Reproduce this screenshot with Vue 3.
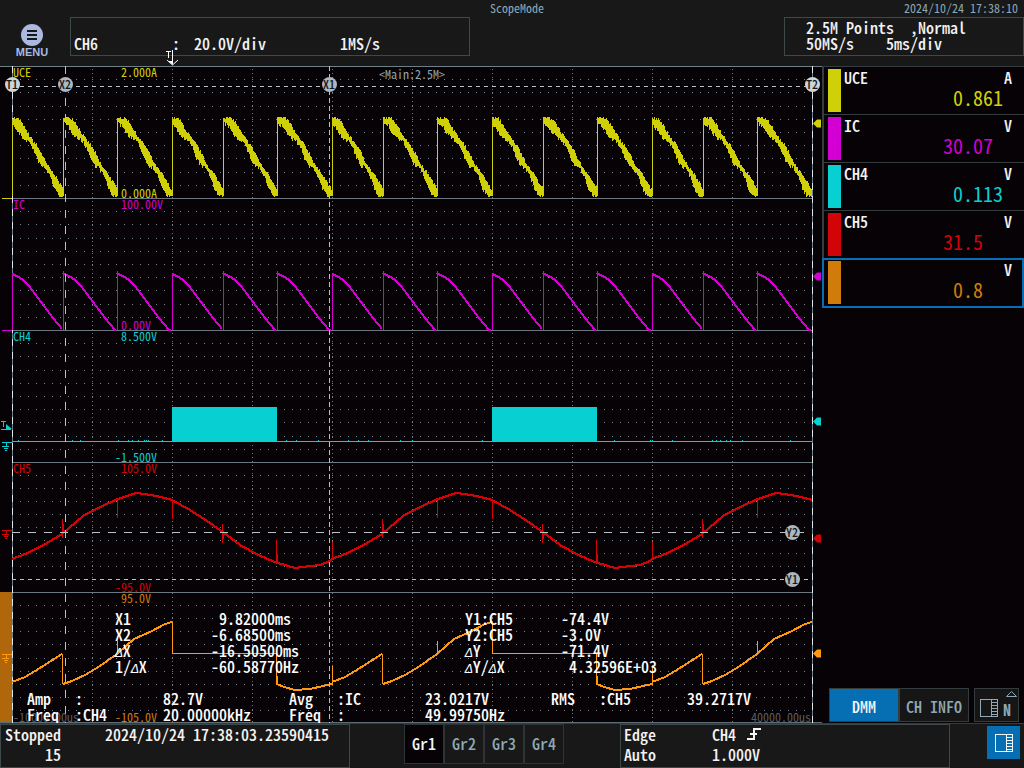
<script setup>
import { ref } from 'vue'

const channels = [
  { name: 'UCE', unit: 'A', value: '0.861', tone: 'yellow' },
  { name: 'IC', unit: 'V', value: '30.07 ', tone: 'magenta' },
  { name: 'CH4', unit: 'V', value: '0.113', tone: 'cyan' },
  { name: 'CH5', unit: 'V', value: '31.5  ', tone: 'red' },
  { name: '', unit: 'V', value: '0.8  ', tone: 'amber' },
]
const record = ['2.5M Points  ,Normal', '50MS/s    5ms/div']
const groups = ['Gr1', 'Gr2', 'Gr3', 'Gr4']
const activeGroup = ref('Gr1')
const activeChannel = ref(4)

const left = 12
const right = 812
const bands = [66, 198, 330, 462, 592, 723]

const dotRows = []
for (let b = 0; b < 5; b++) {
  for (let i = 1; i < 10; i++) {
    dotRows.push(Math.round(bands[b] + ((bands[b + 1] - bands[b]) * i) / 10) + 0.5)
  }
}
const dotCols = Array.from({ length: 9 }, (_, i) => left + 80 * (i + 1) + 0.5)

const resets = [12, 63, 117, 172, 223, 277, 332, 383, 437, 492, 543, 597, 652, 703, 757, 812]

// piecewise-linear lookup in a list of [x, y] points
function at(points, x) {
  for (let i = 1; i < points.length; i++) {
    if (x <= points[i][0]) {
      const [x0, y0] = points[i - 1]
      const [x1, y1] = points[i]
      return y0 + ((y1 - y0) * (x - x0)) / (x1 - x0)
    }
  }
  return points[points.length - 1][1]
}

let seed = 7
function noise() {
  seed = (seed * 16807) % 2147483647
  return seed / 2147483647
}

const currentShape = [[0, 119], [5, 121], [10, 125], [16, 133], [22, 141], [30, 155], [36, 164], [42, 174], [48, 185], [55, 194]]
const rippleShape = [[0, 2], [5, 4], [9, 10], [14, 9], [18, 3], [23, 3], [27, 9], [32, 9], [36, 2], [41, 3], [45, 10], [50, 9], [55, 3]]

let uce = ''
for (let s = 0; s < 15; s++) {
  const x0 = resets[s]
  const x1 = resets[s + 1]
  const shift = s % 3 === 0 ? 3 : 0
  for (let x = x0; x < x1; x++) {
    const t = x - x0 + shift
    const c = at(currentShape, t)
    const h = at(rippleShape, t)
    const top = Math.round(c - h * 0.4 - noise() * 3)
    const bottom = Math.min(197, Math.round(c + h * 0.6 + 1 + noise() * 4))
    uce += `M${x + 0.5} ${Math.max(117, top)}V${bottom}`
  }
  uce += `M${x0 + 0.5} 119V196`
}

const voltShape = [[0, 273], [6, 276], [12, 280], [18, 286], [24, 294], [30, 302], [36, 310], [42, 318], [48, 325], [52, 330], [60, 330]]
let ic = ''
let icEdges = ''
for (let s = 0; s < 15; s++) {
  const shift = s % 3 === 0 ? 1 : 0
  const span = resets[s + 1] - resets[s]
  icEdges += `M${resets[s] + 0.5} 330V${shift ? 274 : 271}`
  for (let t = 0; t < span; t++) ic += `${t ? 'L' : 'M'}${resets[s] + t} ${Math.round(at(voltShape, t + shift))}`
}

const sine = [[0, 559], [13, 554], [30, 546], [50, 534], [71, 516], [88, 507], [106, 499], [124, 493], [133, 494], [145, 496], [160, 500], [178, 510], [195, 521], [211, 532], [228, 545], [246, 555], [263, 562], [283, 568], [298, 566], [308, 565], [320, 560]]
let ch5 = ''
for (let x = left; x <= right; x++) {
  ch5 += `${x === left ? 'M' : 'L'}${x} ${Math.round(at(sine, (x - left) % 320))}`
}
const spikeSet = [[50, 519, 538], [51, 524, 534], [105, 499, 518], [160, 500, 519], [210, 524, 543], [211, 532, 539], [264, 540, 563], [265, 554, 563], [320, 542, 560]]
let spikes = ''
for (let k = 0; k < 3; k++) {
  for (const [x, a, b] of spikeSet) {
    const px = left + x + 320 * k
    if (px < 800) spikes += `M${px + 0.5} ${a}V${b}`
  }
}

const rise = [[12, 682], [25, 677], [40, 668], [62, 654]]
const climb = [[63, 684], [72, 681], [85, 675], [100, 666], [117, 654], [134, 639], [150, 632], [165, 624], [172, 622]]
const trough = [[277, 684], [284, 687], [295, 690], [310, 689], [332, 684]]
let ramp = ''
let rampEdges = ''
for (let k = 0; k < 3; k++) {
  const o = 320 * k
  for (const part of k < 2 ? [rise, climb, trough] : [rise, climb]) {
    ramp += part.map(([x, y], i) => `${i ? 'L' : 'M'}${x + o} ${y}`).join('')
  }
  rampEdges += `M${62.5 + o} 654V684M${117.5 + o} 641V655`
  if (k < 2) rampEdges += `M${172.5 + o} 622V653.5H${276.5 + o}V685M${277.5 + o} 676V685M${332.5 + o} 666V685`
}

let ticks = ''
for (let x = left + 2; x < right; x += 2) {
  if (noise() > 0.88) ticks += `M${x} 440.5h1`
}

const axisLabels = [
  ['UCE', 13, 77, 'yellow'], ['2.000A', 121, 77, 'yellow'], ['0.000A', 121, 198, 'yellow'],
  ['IC', 13, 209, 'magenta'], ['100.00V', 121, 209, 'magenta'], ['0.00V', 121, 330, 'magenta'],
  ['CH4', 13, 341, 'cyan'], ['8.500V', 121, 341, 'cyan'], ['-1.500V', 115, 462, 'cyan'],
  ['CH5', 13, 473, 'red'], ['105.0V', 121, 473, 'red'], ['-95.0V', 115, 592, 'red'],
  ['95.0V', 121, 603, 'amber'], ['-105.0V', 115, 722, 'amber'],
]

const readouts = [
  ['X1', 115, 625], ['9.82000ms', 219, 625],
  ['X2', 115, 641], ['-6.68500ms', 211, 641],
  ['ΔX', 115, 657], ['-16.50500ms', 211, 657],
  ['1/ΔX', 115, 673], ['-60.58770Hz', 211, 673],
  ['Y1:CH5', 465, 625], ['-74.4V', 561, 625],
  ['Y2:CH5', 465, 641], ['-3.0V', 561, 641],
  ['ΔY', 465, 657], ['-71.4V', 561, 657],
  ['ΔY/ΔX', 465, 673], ['4.32596E+03', 569, 673],
  ['Amp', 27, 705], [':', 75, 705], ['82.7V', 163, 705],
  ['Freq', 27, 721], [':CH4', 75, 721], ['20.00000kHz', 163, 721],
  ['Avg', 289, 705], [':IC', 337, 705], ['23.0217V', 425, 705],
  ['Freq', 289, 721], [':', 337, 721], ['49.99750Hz', 425, 721],
  ['RMS', 551, 705], [':CH5', 599, 705], ['39.2717V', 687, 705],
].map(([text, x, y]) => ({ x, y, parts: text.split(/(Δ)/).filter(Boolean) }))

const badges = [
  ['T1', 12, 84, 'bright'], ['X2', 65, 84, 'dim'], ['X1', 329, 84, 'dim'],
  ['T2', 812, 84, 'bright'], ['Y2', 792, 532, 'dim'], ['Y1', 792, 579, 'dim'],
]
const pointers = [[123, 'yellow'], [276, 'magenta'], [421, 'cyan'], [538, 'red'], [653, 'orange']]
const grounds = [[446, 'cyan'], [534, 'red'], [658, 'orange']]
</script>

<template>
  <div class="scope">
    <header class="top">
      <button class="menu" type="button">
        <svg viewBox="0 0 22 22" aria-hidden="true">
          <circle cx="11" cy="11" r="11" fill="#a9b9e0" />
          <path d="M6 7h10M6 11h10M6 15h10" stroke="#181818" stroke-width="2" />
        </svg>
        <span>MENU</span>
      </button>
      <div class="channel-box">
        <span>CH6</span><span>:</span><span>20.0V/div</span><span>1MS/s</span>
      </div>
      <div class="mode">ScopeMode</div>
      <div class="clock">
        <time>2024/10/24 17:38:10</time>
        <div class="record-box">
          <div v-for="line in record" :key="line">{{ line }}</div>
        </div>
      </div>
    </header>

    <main class="main">
      <svg class="plot" viewBox="0 66 822 657" role="img" aria-label="Waveforms">
        <g class="crisp" fill="none">
          <rect x="0" y="592" width="12" height="131" fill="#b0660a" />
          <path v-for="y in dotRows" :key="'r' + y" :d="`M20 ${y}H811`" stroke="#7a868f" stroke-dasharray="1 7" />
          <path v-for="x in dotCols" :key="'c' + x" :d="`M${x} 69V722`" stroke="#6c7880" stroke-dasharray="1 3" />
          <path d="M12 198.5H812M12 330.5H812M12 462.5H812M12 592.5H812" stroke="#6b7880" />
          <path d="M0 66.5H822" stroke="#6f7f88" />
          <path d="M0 722.5H822" stroke="#5d6c75" />
          <path d="M12.5 66V723M812.5 66V723" stroke="#6f8290" />
          <path d="M12.5 66V723M812.5 66V723" stroke="#dfe7ea" stroke-dasharray="7 6" />

          <path d="M2 198.5H12" class="yellow" />
          <path d="M2 330.5H12" class="magenta" />
          <path :d="uce" class="yellow" />
          <path :d="ic" class="magenta curve" />
          <path :d="icEdges" class="magenta" />
          <rect x="172" y="407" width="105" height="34" fill="#08d0d2" />
          <rect x="492" y="407" width="105" height="34" fill="#08d0d2" />
          <path d="M12 441.5H812" class="cyan" />
          <path :d="ticks" class="cyan" />
          <path :d="ch5" class="red curve" />
          <path :d="spikes" class="red" />
          <path :d="ramp" class="orange curve" />
          <path :d="rampEdges" class="orange" />

          <g stroke="#b9c2c7">
            <path d="M65.5 66V723" stroke-dasharray="8 8" />
            <path d="M329.5 66V723" stroke-dasharray="5 3" />
            <path d="M12 86.5H812" stroke-dasharray="4 4" />
            <path d="M12 532.5H812" stroke-dasharray="8 8" />
            <path d="M12 579.5H812" stroke-dasharray="4 4" />
          </g>
        </g>

        <path v-for="[y, tone] in pointers" :key="tone" :class="'fill-' + tone" :d="`M813 ${y + 0.5}l4 -4h4v8h-4z`" />
        <g v-for="[y, tone] in grounds" :key="'g' + y" :class="tone" class="crisp">
          <path :d="`M2 ${y - 3.5}H12M6.5 ${y - 4}v4M2 ${y + 0.5}H9M4 ${y + 2.5}H8M5 ${y + 4.5}H7`" fill="none" />
        </g>
        <path class="cyan crisp" fill="none" d="M1 421.5h5M3.5 421v6M1 429.5h10" />
        <path fill="#08d0d2" d="M6 424v5h6z" />

        <g class="small-text">
          <text v-for="[text, x, y, tone] in axisLabels" :key="text + y" :x="x" :y="y" :class="'fill-' + tone">{{ text }}</text>
          <text x="379" y="79" fill="#8fa8b4">&lt;Main:2.5M&gt;</text>
          <text x="13" y="722" fill="#5c5c5c">-10000.00us</text>
          <text x="751" y="722" fill="#5c5c5c">40000.00us</text>
        </g>

        <g class="big-text">
          <text v-for="r in readouts" :key="r.x + '-' + r.y" :x="r.x" :y="r.y"><tspan v-for="(p, i) in r.parts" :key="i" :class="{ delta: p === 'Δ' }">{{ p }}</tspan></text>
        </g>

        <g v-for="[text, x, y, look] in badges" :key="text" class="badge" :class="look">
          <circle :cx="x + 0.5" :cy="y + 0.5" r="7.5" />
          <text :x="x" :y="y + 5">{{ text }}</text>
        </g>

        <path d="M172.5 50V62" stroke="#fff" class="crisp" />
        <path d="M167 60l5.500 5l5.500 -5" fill="none" stroke="#fff" />
        <path d="M168 61h5v4z" fill="#fff" />
        <path d="M166 51.500h5M168.500 51v7" fill="none" stroke="#fff" class="crisp" />
      </svg>

      <aside class="side">
        <ul class="meters">
          <li v-for="(c, i) in channels" :key="i">
            <button type="button" class="meter" :class="{ selected: i === activeChannel }" @click="activeChannel = i">
              <span class="swatch" :class="'bg-' + c.tone"></span>
              <span class="name">{{ c.name }}</span>
              <span class="unit">{{ c.unit }}</span>
              <span class="value" :class="'text-' + c.tone">{{ c.value }}</span>
            </button>
          </li>
        </ul>
        <div class="tabs">
          <button type="button" class="tab on">DMM</button>
          <button type="button" class="tab">CH INFO</button>
          <button type="button" class="tab panel" aria-label="Panel N">
            <svg viewBox="0 0 43 32" aria-hidden="true">
              <g fill="none" stroke="#8fa8b4" class="crisp">
                <rect x="5.500" y="10.500" width="17" height="17" />
                <path d="M16.500 10v18M17 13.500h6M17 16.500h6M17 19.500h6M17 22.500h6M17 25.500h6" />
              </g>
              <path d="M31.500 7.500h10l-5 -5z" fill="none" stroke="#8fa8b4" />
              <text x="28" y="27">N</text>
            </svg>
          </button>
        </div>
      </aside>
    </main>

    <footer class="bottom">
      <div class="status">
        <div class="pair end"><div>Stopped</div><div>15</div></div>
        <time>2024/10/24 17:38:03.23590415</time>
      </div>
      <nav class="groups">
        <button v-for="g in groups" :key="g" type="button" :class="{ on: g === activeGroup }" @click="activeGroup = g">{{ g }}</button>
      </nav>
      <div class="trigger">
        <div class="pair"><div>Edge</div><div>Auto</div></div>
        <div class="pair">
          <div class="source">
            <span>CH4</span>
            <svg viewBox="0 0 16 16" role="img" aria-label="Rising edge"><path d="M1 13H8V3H15M4 8h7" fill="none" stroke="#f4f4f4" stroke-width="2" class="crisp" /></svg>
          </div>
          <div>1.000V</div>
        </div>
      </div>
      <button class="layout" type="button" aria-label="Toggle side panel">
        <svg viewBox="0 0 18 18" class="crisp" aria-hidden="true">
          <g fill="none" stroke="#f4f4f4">
            <rect x="0.500" y="0.500" width="17" height="17" />
            <path d="M11.500 0v18M12 3.500h6M12 6.500h6M12 9.500h6M12 12.500h6M12 15.500h6" />
          </g>
        </svg>
      </button>
    </footer>
  </div>
</template>

<style>
body {
  margin: 0;
  background: #181818;
}
</style>

<style scoped>
.scope {
  display: flex;
  flex-direction: column;
  min-height: 100vh;
  background: #181818;
  color: #f4f2f2;
  font-family: "Noto Sans CJK JP", "Liberation Mono", monospace;
  font-feature-settings: "hwid";
  font-size: 16px;
  font-weight: 500;
  line-height: 16px;
  white-space: pre;
}
.scope * {
  box-sizing: border-box;
}
button {
  margin: 0;
  padding: 0;
  border: 0;
  border-radius: 0;
  background: none;
  color: inherit;
  font: inherit;
  font-feature-settings: inherit;
  white-space: pre;
}
.crisp {
  shape-rendering: crispEdges;
}

.top {
  display: grid;
  grid-template-columns: 70px 400px 1fr 240px;
  height: 66px;
}
.menu {
  display: flex;
  flex-direction: column;
  align-items: center;
  justify-content: flex-start;
  padding: 24px 6px 0 0;
  color: #a9b9e0;
  font-family: "Liberation Sans", sans-serif;
  font-size: 11px;
  font-weight: bold;
  line-height: 13px;
}
.menu svg {
  width: 22px;
  height: 22px;
}
.channel-box {
  display: grid;
  grid-template-columns: 98px 22px 146px 1fr;
  align-content: end;
  height: 39px;
  margin-top: 17px;
  padding: 0 0 4px 3px;
  border: 1px solid #3d484b;
}
.mode {
  padding: 0 0 0 20px;
  color: #8aa8b5;
  font-size: 12px;
  font-weight: 400;
}
.clock time {
  display: block;
  height: 17px;
  padding: 0 6px 0 0;
  color: #8aa8b5;
  font-size: 12px;
  font-weight: 400;
  text-align: right;
}
.record-box {
  height: 39px;
  padding: 1px 0 0 21px;
  border: 1px solid #3d484b;
}

.main {
  display: grid;
  grid-template-columns: 1fr 202px;
  flex: 1;
  background: #060206;
}
.plot {
  display: block;
  width: 100%;
  overflow: visible;
}
.curve {
  stroke-width: 2px;
}
.small-text {
  font-size: 12px;
  font-weight: 400;
}
.big-text {
  fill: #fcfcfc;
  font-size: 16px;
}
.delta {
  font-family: "Liberation Mono", monospace;
  font-size: 13px;
  font-style: italic;
}
.badge {
  font-size: 12px;
}
.badge text {
  fill: #14181a;
  text-anchor: middle;
}
.bright circle { fill: #cbd5da; }
.dim circle { fill: #adb7bd; }
.yellow { stroke: #d0d008; }
.magenta { stroke: #d200d2; }
.cyan { stroke: #08d0d2; }
.red { stroke: #d20408; }
.orange { stroke: #ff9a10; }
.fill-yellow { fill: #d0d008; }
.fill-magenta { fill: #d200d2; }
.fill-cyan { fill: #08d0d2; }
.fill-red { fill: #d20408; }
.fill-orange { fill: #ff9a10; }
.fill-amber { fill: #d07c0a; }
.bg-yellow { background: #d0d008; }
.bg-magenta { background: #d200d2; }
.bg-cyan { background: #08d0d2; }
.bg-red { background: #d20408; }
.bg-amber { background: #d07c0a; }
.text-yellow { color: #d0d008; }
.text-magenta { color: #d200d2; }
.text-cyan { color: #08d0d2; }
.text-red { color: #d20408; }
.text-amber { color: #d07c0a; }

.side {
  display: flex;
  flex-direction: column;
  justify-content: space-between;
  border-top: 1px solid #343c3e;
}
.meters {
  margin: 0;
  padding: 0;
  list-style: none;
}
.meter {
  display: grid;
  grid-template-columns: 13px 1fr auto;
  grid-template-rows: 18px 22px;
  column-gap: 3px;
  width: 100%;
  height: 48px;
  padding: 2px 12px 0 4px;
  border-bottom: 1px solid #343c3e;
  border-left: 2px solid #343c3e;
  text-align: left;
}
.meter.selected {
  height: 50px;
  margin-top: -1px;
  padding: 1px 10px 0 4px;
  border: 2px solid #066fb4;
}
.swatch {
  grid-row: 1 / 3;
  height: 43px;
}
.value {
  grid-column: 2 / 4;
  padding-right: 9px;
  font-size: 20px;
  font-weight: 400;
  line-height: 22px;
  text-align: right;
}
.tabs {
  display: grid;
  grid-template-columns: 70px 70px 45px;
  column-gap: 0;
  height: 35px;
  padding-left: 7px;
}
.tab {
  height: 34px;
  padding-top: 2px;
  border: 1px solid #343c3e;
  background: #161616;
  color: #8fa8b4;
}
.tab.on {
  background: #066fb4;
  color: #f4f4f4;
}
.tab.panel {
  margin-right: -5px;
  margin-left: 5px;
  padding-top: 0;
}
.panel svg {
  display: block;
  width: 100%;
}
.panel text {
  fill: #8fa8b4;
  font-size: 16px;
  font-weight: bold;
}

.bottom {
  display: grid;
  grid-template-columns: 350px 1fr 330px 74px;
  height: 45px;
  border-top: 1px solid #343c3e;
}
.status,
.trigger {
  display: flex;
  border: 1px solid #3d484b;
}
.status {
  justify-content: space-between;
  padding: 1px 20px 0 4px;
}
.pair {
  display: flex;
  flex-direction: column;
  gap: 4px;
}
.end {
  text-align: right;
}
.groups {
  display: flex;
  justify-content: center;
  padding-right: 2px;
}
.groups button {
  width: 40px;
  height: 40px;
  padding-bottom: 2px;
  border: 1px solid #2c3436;
  color: #8fa8b4;
}
.groups .on {
  background: #060206;
  color: #f4f4f4;
}
.trigger {
  gap: 56px;
  padding: 1px 0 0 3px;
}
.source {
  display: flex;
  gap: 10px;
}
.source svg {
  width: 16px;
  height: 16px;
}
.layout {
  display: grid;
  place-items: center;
  width: 33px;
  height: 33px;
  margin: 2px 0 0 37px;
  background: #066fb4;
}
.layout svg {
  width: 18px;
  height: 18px;
}
</style>
